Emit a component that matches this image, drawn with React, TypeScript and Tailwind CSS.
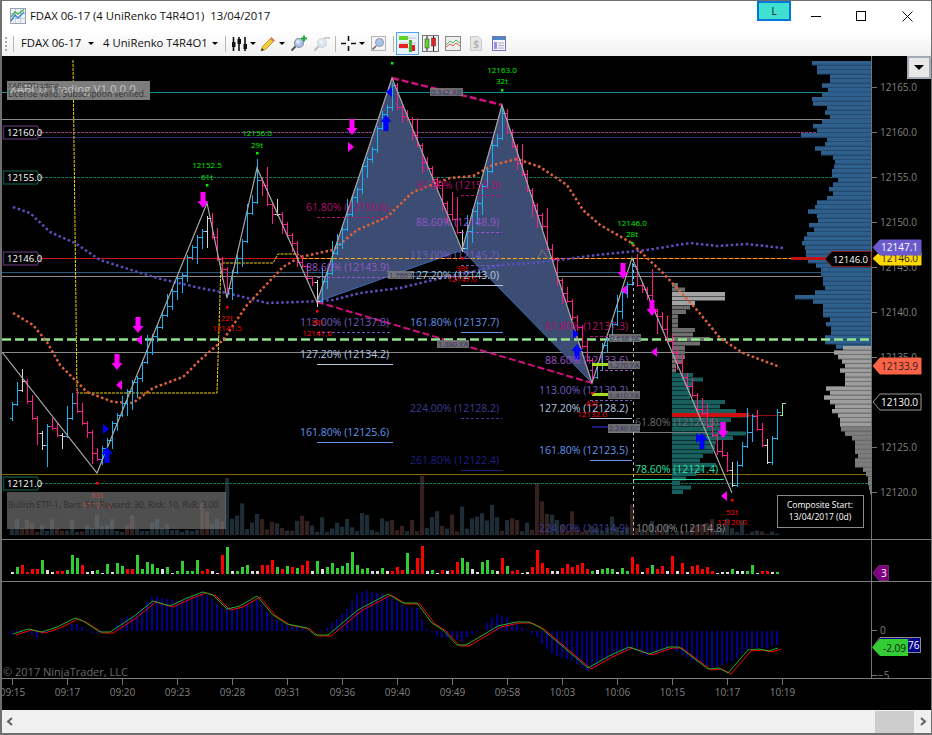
const TIMES = ["09:15", "09:17", "09:20", "09:23", "09:28", "09:31", "09:36", "09:40", "09:49", "09:58", "10:03", "10:06", "10:15", "10:17", "10:19"]
const SCALE = [[12165, 87], [12160, 132], [12155, 177], [12150, 222], [12145, 267], [12140, 312], [12135, 357], [12125, 447], [12120, 492]]

type Pt = [number, number]

const ZIGZAG: Pt[] = [[2, 352], [97, 473], [207, 203], [227, 298], [257, 168], [317, 302], [392, 78], [462, 250], [502, 105], [592, 383], [632, 258], [732, 493]]
const PRICE: Pt[] = [[12, 405], [22, 378], [37, 435], [42, 450], [47, 420], [62, 438], [72, 402], [87, 435], [97, 462], [207, 215], [227, 292], [257, 180], [317, 295], [392, 90], [462, 245], [502, 118], [592, 375], [632, 268], [732, 482], [752, 412], [767, 462], [772, 438], [777, 412]]

const PURPLE_DOTS: Pt[] = [[13, 207], [30, 213], [50, 232], [75, 243], [100, 260], [157, 278], [200, 288], [227, 293], [267, 303], [300, 302], [333, 300], [360, 293], [400, 288], [433, 280], [467, 273], [500, 265], [533, 263], [567, 259], [597, 255], [647, 250], [690, 243], [717, 246], [747, 244], [783, 248]]
const ORANGE_DOTS: Pt[] = [[13, 313], [33, 325], [47, 342], [60, 365], [87, 392], [113, 402], [133, 403], [153, 388], [183, 377], [200, 360], [223, 340], [247, 305], [283, 267], [300, 257], [333, 250], [357, 230], [387, 217], [413, 192], [450, 178], [473, 176], [493, 165], [517, 159], [540, 167], [567, 185], [583, 210], [600, 225], [630, 242], [663, 273], [697, 310], [720, 338], [743, 353], [780, 367]]

const MACD_G: Pt[] = [[13, 634], [28, 629], [42, 632], [57, 627], [75, 618], [83, 621], [100, 632], [110, 632], [133, 617], [153, 601], [170, 606], [187, 598], [203, 592], [213, 595], [227, 609], [240, 606], [257, 596], [273, 615], [287, 624], [307, 628], [315, 635], [328, 635], [358, 610], [373, 602], [388, 594], [403, 603], [417, 603], [432, 623], [443, 630], [457, 645], [466, 645], [483, 635], [498, 626], [516, 622], [529, 622], [541, 628], [588, 668], [609, 656], [629, 647], [649, 654], [669, 647], [679, 647], [708, 669], [719, 668], [728, 673], [748, 650], [759, 649], [769, 651], [778, 648]]
const HIST: Pt[] = [[13, -3], [18, 0], [33, -4], [38, -8], [43, -2], [57, 0], [68, 2], [73, 8], [78, 7], [83, 3], [93, -2], [113, 0], [118, 8], [123, 13], [138, 17], [143, 25], [153, 35], [168, 32], [178, 30], [188, 33], [203, 40], [208, 35], [223, 22], [238, 23], [258, 33], [268, 17], [283, 7], [303, 3], [313, -2], [318, 0], [328, 3], [333, 10], [338, 13], [348, 23], [353, 32], [358, 38], [368, 40], [378, 38], [388, 35], [398, 28], [403, 25], [418, 23], [423, 8], [428, 1], [433, -3], [438, -5], [443, -7], [453, -8], [463, -10], [468, -5], [473, -2], [483, 0], [488, 10], [498, 17], [508, 13], [528, 0], [538, -7], [543, -15], [553, -23], [563, -27], [573, -30], [586, -40], [593, -38], [603, -30], [613, -25], [633, -18], [646, -25], [659, -23], [668, -18], [679, -22], [699, -32], [713, -37], [733, -30], [749, -17], [766, -17], [778, -14]]

const VOL = "w2 g7 r9 r2 r5 r5 g14 w4 w2 r3 r3 g4 g19 g16 r9 w2 w3 g4 w1 g10 w2 g11 g8 r5 r5 g19 g5 g12 g10 g6 w5 g7 w1 g3 g13 g3 g3 g14 r3 r5 w3 w1 r19 g27 w3 g3 g7 g9 w3 w3 r9 r9 r14 g7 r5 g8 r7 g6 r9 r13 w3 g13 w5 g7 g11 g6 g8 g11 g22 g9 g5 g6 w3 w3 g6 w3 r3 r7 r4 g21 r4 r16 r28 w3 g4 w1 r4 w3 r4 r12 g16 g12 w5 w2 g12 g14 g4 w3 r16 g8 r3 r4 w1 w2 r7 r24 r11 r6 w3 w3 r6 r10 r7 r9 r11 r5 g3 w4 g5 g6 g5 w2 g6 g3 r17 r10 w2 r6 g9 r5 r8 w3 r18 w3 r11 w2 r8 r9 r5 r7 r3 w1 w2 w2 g5 w3 w3 g3 g9 w1 r3 r3 w2 g2".split(" ")

const COMPOSITE_BLUE = [59, 54, 54, 41, 41, 49, 43, 49, 59, 58, 44, 46, 41, 49, 58, 54, 70, 44, 46, 56, 50, 38, 36, 37, 39, 39, 33, 38, 42, 38, 44, 54, 56, 63, 54, 53, 62, 57, 64, 67, 69, 66, 65, 65, 63, 55, 50, 50, 48, 48, 46, 56, 76, 58, 48, 48, 48, 41, 45, 40, 40, 46, 46, 35]
const COMPOSITE_GRAY = [28, 37, 33, 29, 26, 31, 26, 26, 26, 45, 41, 47, 41, 36, 39, 33, 31, 31, 30, 26, 19, 16, 16, 16, 13, 16, 16, 8, 5, 3, 3, 2, 1]
const SESSION_GRAY = [6, 13, 53, 53, 23, 18, 14, 6, 6, 6, 23, 21, 38, 28, 13, 13, 13, 11, 4, 4]
const SESSION_TEAL = [21, 31, 21, 18, 18, 18, 53, 48, 64, 76, 59, 54, 54, 74, 61, 44, 43, 41, 31, 28, 44, 31, 24, 14, 8, 19, 11]

const PINK = "#b0106e"
const VIOLET = "#9a55c8"
const INDIGO = "#6f5cc0"
const STEEL = "#b4c6e0"
const CORN = "#6495ed"
const FIBS: { t: string; x: number; y: number; c: string; lx: number; lw: number; dash?: boolean }[] = [
  { t: "61.80% (12150.6)", x: 306, y: 207, c: PINK, lx: 317, lw: 75, dash: true },
  { t: "61.80% (12153.0)", x: 417, y: 185, c: PINK, lx: 461, lw: 41, dash: true },
  { t: "88.60% (12148.9)", x: 416, y: 222, c: VIOLET, lx: 461, lw: 41, dash: true },
  { t: "113.00% (12145.2)", x: 410, y: 255, c: INDIGO, lx: 461, lw: 41, dash: true },
  { t: "88.60% (12143.9)", x: 306, y: 267, c: VIOLET, lx: 317, lw: 75, dash: true },
  { t: "127.20% (12143.0)", x: 410, y: 275, c: STEEL, lx: 461, lw: 42 },
  { t: "113.00% (12137.8)", x: 300, y: 322, c: INDIGO, lx: 317, lw: 75, dash: true },
  { t: "161.80% (12137.7)", x: 410, y: 322, c: CORN, lx: 461, lw: 42 },
  { t: "127.20% (12134.2)", x: 300, y: 354, c: STEEL, lx: 317, lw: 76 },
  { t: "224.00% (12128.2)", x: 410, y: 408, c: "#3c3c94", lx: 461, lw: 41, dash: true },
  { t: "161.80% (12125.6)", x: 300, y: 432, c: CORN, lx: 317, lw: 76 },
  { t: "261.80% (12122.4)", x: 410, y: 460, c: "#1f1f82", lx: 461, lw: 42 },
  { t: "61.80% (12137.3)", x: 545, y: 326, c: PINK, lx: 590, lw: 42, dash: true },
  { t: "88.60% (12133.6)", x: 545, y: 360, c: VIOLET, lx: 590, lw: 42, dash: true },
  { t: "113.00% (12130.2)", x: 539, y: 390, c: INDIGO, lx: 590, lw: 42, dash: true },
  { t: "127.20% (12128.2)", x: 539, y: 408, c: STEEL, lx: 590, lw: 42 },
  { t: "161.80% (12123.5)", x: 539, y: 450, c: CORN, lx: 590, lw: 42 },
  { t: "61.80% (12126.6)", x: 635, y: 422, c: "#6e6e6e", lx: 0, lw: 0 },
  { t: "78.60% (12121.4)", x: 635, y: 469, c: "#2fe0a4", lx: 633, lw: 91 },
  { t: "224.00% (12114.9)", x: 539, y: 528, c: "#3c3c94", lx: 0, lw: 0 },
  { t: "100.00% (12114.8)", x: 636, y: 528, c: "#8a8a8a", lx: 0, lw: 0 },
]

const RATIOS: { t: string; x: number; y: number; w: number }[] = [
  { t: "0.342 AB", x: 430, y: 88, w: 33 },
  { t: "1.786 XA", x: 388, y: 271, w: 24 },
  { t: "1.380 XA", x: 437, y: 340, w: 32 },
  { t: "0.618 BC", x: 609, y: 334, w: 32 },
  { t: "1.270 XA", x: 608, y: 361, w: 32 },
  { t: "1.410 XA", x: 608, y: 391, w: 32 },
  { t: "2.240 BC", x: 608, y: 424, w: 32 },
]

const PIVOTS: { x: number; y: number; c: string; lines: [string, number][] }[] = [
  { x: 207, y: 185, c: "#00f000", lines: [["12152.5", 165], ["61t", 177]] },
  { x: 257, y: 153, c: "#00f000", lines: [["12156.0", 133], ["29t", 145]] },
  { x: 392, y: 63, c: "#00f000", lines: [] },
  { x: 502, y: 90, c: "#00f000", lines: [["12163.0", 70], ["32t", 81]] },
  { x: 632, y: 243, c: "#00f000", lines: [["12146.0", 223], ["28t", 234]] },
  { x: 97, y: 483, c: "#ff0000", lines: [["63t", 495], ["12121.0", 505]] },
  { x: 227, y: 307, c: "#ff0000", lines: [["22t", 318], ["12141.5", 328]] },
  { x: 317, y: 311, c: "#ff0000", lines: [["30t", 322], ["12141.0", 333]] },
  { x: 462, y: 258, c: "#ff0000", lines: [["38t", 268], ["12147.0", 279]] },
  { x: 592, y: 393, c: "#ff0000", lines: [["62t", 403], ["12132.0", 414]] },
  { x: 732, y: 500, c: "#ff0000", lines: [["52t", 512], ["12120.0", 522]] },
]

const DOWN_ARROWS: Pt[] = [[203, 200], [352, 127], [117, 362], [138, 325], [623, 271], [652, 308], [723, 430]]
const UP_ARROWS: Pt[] = [[107, 455], [386, 123], [577, 352], [702, 441]]
const TRIANGLES: { x: number; y: number; c: string; dir: number }[] = [
  { x: 120, y: 385, c: "#ff00ff", dir: -1 },
  { x: 140, y: 340, c: "#ff00ff", dir: -1 },
  { x: 350, y: 147, c: "#ff00ff", dir: 1 },
  { x: 625, y: 290, c: "#ff00ff", dir: -1 },
  { x: 655, y: 352, c: "#ff00ff", dir: -1 },
  { x: 725, y: 496, c: "#ff00ff", dir: -1 },
  { x: 105, y: 429, c: "#0000ff", dir: 1 },
  { x: 390, y: 92, c: "#0000ff", dir: -1 },
  { x: 575, y: 334, c: "#0000ff", dir: 1 },
  { x: 698, y: 438, c: "#0000ff", dir: 1 },
]

const noise = (i: number) => {
  const v = Math.sin(i * 12.9898 + 4.1) * 43758.5453
  return v - Math.floor(v)
}

const interp = (pts: Pt[], x: number) => {
  for (let i = 1; i < pts.length; i++) {
    if (x <= pts[i][0]) {
      const [x0, y0] = pts[i - 1]
      const [x1, y1] = pts[i]
      return y0 + ((x - x0) / (x1 - x0)) * (y1 - y0)
    }
  }
  return pts[pts.length - 1][1]
}

const toPoints = (pts: Pt[]) => pts.map((p) => p.join(",")).join(" ")

const barX = (i: number) => 12 + 5 * i

const trendAt = (x: number) => Math.sign(interp(PRICE, x + 2) - interp(PRICE, x - 2))

const closes = VOL.map((_, i) => interp(PRICE, barX(i)) + (i > 148 ? 0 : (noise(i) - 0.5) * 12))

function Bars() {
  return (
    <g shapeRendering="crispEdges" fill="none">
      {closes.map((c, i) => {
        const o = i === 0 ? c + 14 : closes[i - 1]
        const x = barX(i) + 0.5
        const against = Math.sign(c - o) !== trendAt(barX(i))
        const color = against ? "#d6d6d6" : c < o ? "#1bb0f2" : "#ff1a8c"
        const wick = 3 + noise(i + 70) * noise(i + 110) * 26
        const top = Math.min(o, c) - (noise(i + 150) > 0.5 ? wick : 2)
        const bottom = Math.max(o, c) + (noise(i + 150) > 0.5 ? 2 : wick)
        return (
          <path
            key={i}
            stroke={color}
            d={`M${x} ${Math.round(top)}V${Math.round(bottom)}M${x - 3} ${Math.round(o)}H${x}M${x} ${Math.round(c)}H${x + 3}`}
          />
        )
      })}
      <path stroke="#90ee90" d="M782.5 403V416M780 415H782.5M782.5 403H786" />
    </g>
  )
}

function Flag({ x, y, w, h, fill, stroke, text, color, size = 10 }: { x: number; y: number; w: number; h: number; fill: string; stroke: string; text: string; color: string; size?: number }) {
  return (
    <g>
      <polygon points={`${x},${y + h / 2} ${x + 7},${y} ${x + w},${y} ${x + w},${y + h} ${x + 7},${y + h}`} fill={fill} stroke={stroke} />
      <text x={x + w - 3} y={y + h / 2 + 3.5} fontSize={size} textAnchor="end" fill={color}>
        {text}
      </text>
    </g>
  )
}

function LeftFlag({ y, stroke, text }: { y: number; stroke: string; text: string }) {
  return (
    <g>
      <polygon points={`3.5,${y - 6.5} 37,${y - 6.5} 40.5,${y} 37,${y + 6.5} 3.5,${y + 6.5}`} fill="#000" stroke={stroke} strokeWidth={1.5} />
      <text x={7} y={y + 3.5} fontSize={9.5} fill="#fff">
        {text}
      </text>
    </g>
  )
}

function AxisLine({ y1, y2 }: { y1: number; y2: number }) {
  return <line x1={871.5} x2={871.5} y1={y1} y2={y2} stroke="#747474" />
}

function MainPane() {
  return (
    <div className="relative h-[484px] border-b border-[#7c7c7c]">
      <svg width={929} height={483} viewBox="2 56 929 483" className="block">
        {VOL.map((v, i) => {
          const spikes: Record<number, number> = { 43: 57, 82: 59, 105: 52 }
          const taper = i > 146 ? 0.2 : i > 125 ? 0.6 : 1
          const h = spikes[i] ?? (3 + noise(i + 200) * noise(i + 300) * 32) * taper
          return <rect key={i} x={barX(i) - 2} y={535 - h} width={4.2} height={h} fill={v[0] === "r" ? "#34201f" : "#1e2c35"} />
        })}

        <line x1={2} x2={871} y1={92.5} y2={92.5} stroke="#0f8f8f" />
        <line x1={2} x2={871} y1={119.5} y2={119.5} stroke="#8a8a8a" />
        <line x1={41} x2={871} y1={132.5} y2={132.5} stroke="#8b3f8b" strokeDasharray="3 1" />
        <line x1={2} x2={871} y1={137.5} y2={137.5} stroke="#2b2b70" />
        <line x1={41} x2={871} y1={177.5} y2={177.5} stroke="#17735c" strokeDasharray="3 1" />
        <line x1={41} x2={871} y1={258.5} y2={258.5} stroke="#c81414" />
        <line x1={2} x2={871} y1={272.5} y2={272.5} stroke="#27587c" />
        <line x1={2} x2={871} y1={276.5} y2={276.5} stroke="#8a8a8a" />
        <line x1={2} x2={871} y1={352.5} y2={352.5} stroke="#8a8a8a" />
        <line x1={2} x2={871} y1={474.5} y2={474.5} stroke="#87660f" />
        <line x1={41} x2={871} y1={483.5} y2={483.5} stroke="#17735c" strokeDasharray="3 1" />

        {COMPOSITE_BLUE.map((w, i) => (
          <g key={i}>
            <rect x={871 - w} y={61 + i * 4.5} width={w} height={4.5} fill="#244a6e" />
            <rect x={871 - w} y={61 + i * 4.5} width={w} height={3.5} fill="#2f5f8c" />
          </g>
        ))}
        {COMPOSITE_GRAY.map((w, i) => (
          <g key={i}>
            <rect x={871 - w} y={346 + i * 4.5} width={w} height={4.5} fill="#6e6e6e" />
            <rect x={871 - w} y={346 + i * 4.5} width={w} height={3.5} fill={i < 18 ? "#9e9e9e" : "#7c7c7c"} />
          </g>
        ))}
        {SESSION_GRAY.map((w, i) => (
          <rect key={i} x={672} y={283 + i * 4.5} width={w} height={4} fill={i > 1 && i < 5 ? "#a4a4a4" : "#6f6f6f"} />
        ))}
        {SESSION_TEAL.map((w, i) => (
          <rect key={i} x={672} y={373 + i * 4.5} width={w} height={4} fill="#17605e" />
        ))}
        <rect x={672} y={413} width={77} height={4} fill="#d01010" />
        <line x1={749} x2={780} y1={415.5} y2={415.5} stroke="#8a1010" />
        <rect x={791} y={257} width={34} height={3} fill="#c01414" />
        <line x1={608} x2={707} y1={432.5} y2={432.5} stroke="#7a7a7a" />

        <polygon points="317,302 392,78 462,250" fill="#3c4c72" />
        <polygon points="462,250 502,105 592,383" fill="#3c4c72" />
        <polyline points="538,258 542,250 548,258" fill="none" stroke="#7a7a6a" />
        <line x1={317} y1={302} x2={462} y2={250} stroke="#3d6ab0" />
        <line x1={462} y1={250} x2={592} y2={383} stroke="#3d6ab0" />

        <line x1={392} y1={78} x2={502} y2={105} stroke="#d0107f" strokeWidth={2.5} strokeDasharray="7 3" />
        <line x1={317} y1={302} x2={592} y2={383} stroke="#d0107f" strokeWidth={2} strokeDasharray="7 3" />

        <polyline points="73,60 76,310 77,393 217,393 221,263 273,263 278,254 298,254 303,258" fill="none" stroke="#f2d200" strokeDasharray="3 1" />
        <line x1={303} x2={791} y1={258.5} y2={258.5} stroke="#ffb000" strokeDasharray="4 2" />
        <line x1={2} x2={871} y1={339.5} y2={339.5} stroke="#93e48f" strokeWidth={2.5} strokeDasharray="9 4" />
        <line x1={633.5} x2={633.5} y1={258} y2={535} stroke="#bbb" strokeDasharray="3 3" />

        <polyline points={toPoints(PURPLE_DOTS)} fill="none" stroke="#5b50bd" strokeWidth={2.5} strokeDasharray="2.5 2.5" />
        <polyline points={toPoints(ORANGE_DOTS)} fill="none" stroke="#e0603a" strokeWidth={2.5} strokeDasharray="2.5 2.5" />

        <Bars />
        <polyline points={toPoints(ZIGZAG)} fill="none" stroke="#a8a8a8" strokeWidth={1.2} />

        {DOWN_ARROWS.map(([x, y], i) => (
          <path key={i} d={`M${x - 2.5} ${y - 8}h5v9h3l-5.5 7l-5.5-7h3z`} fill="#ff00ff" />
        ))}
        {UP_ARROWS.map(([x, y], i) => (
          <path key={i} d={`M${x - 2.5} ${y + 8}h5v-9h3l-5.5-7l-5.5 7h3z`} fill="#0000ff" />
        ))}
        {TRIANGLES.map((t, i) => (
          <path key={i} d={`M${t.x + 4 * t.dir} ${t.y}L${t.x - 2 * t.dir} ${t.y - 5}V${t.y + 5}z`} fill={t.c} />
        ))}

        {FIBS.map((f) => (
          <g key={f.t + f.x}>
            <text x={f.x} y={f.y + 4} fontSize={10.5} fill={f.c}>
              {f.t}
            </text>
            {f.lw > 0 && <line x1={f.lx} x2={f.lx + f.lw} y1={f.y + 10.5} y2={f.y + 10.5} stroke={f.c} strokeDasharray={f.dash ? "3 2" : undefined} />}
          </g>
        ))}

        <rect x={592} y={363} width={16} height={3} fill="#a4e020" />
        <rect x={592} y={393} width={16} height={3} fill="#a4e020" />
        <rect x={592} y={426} width={16} height={2} fill="#1a1a80" />
        {RATIOS.map((r) => (
          <g key={r.t}>
            <rect x={r.x} y={r.y} width={r.w} height={8} fill="#7e7e7e" opacity={0.85} />
            <text x={r.x + 1} y={r.y + 7} fontSize={7.5} fill="#35356e">
              {r.t}
            </text>
          </g>
        ))}

        {PIVOTS.map((p) => (
          <g key={p.x} fill={p.c} textAnchor="middle" fontSize={8}>
            <rect x={p.x - 1} y={p.y - 1} width={2.5} height={2.5} />
            {p.lines.map(([t, y]) => (
              <text key={t} x={p.x} y={y + 3}>
                {t}
              </text>
            ))}
          </g>
        ))}

        <LeftFlag y={132.5} stroke="#4c2a5c" text="12160.0" />
        <LeftFlag y={177.5} stroke="#0c4a3c" text="12155.0" />
        <LeftFlag y={258.5} stroke="#4c2a5c" text="12146.0" />
        <LeftFlag y={483.5} stroke="#0c4a3c" text="12121.0" />

        <rect x={7} y={81} width={143} height={19} fill="#7d7d7d" />
        <text x={10} y={93} fontSize={11.5} fill="#c4c4c4">
          XABCD Trading V1.0.0.0
        </text>
        <text x={8} y={88} fontSize={7.5} fill="#333">
          XABCDTrading
        </text>
        <text x={8} y={97} fontSize={8.5} fill="#333">
          License valid. Subscription verified.
        </text>

        <rect x={7} y={492} width={219} height={37} fill="#808080" opacity={0.62} />
        <text x={8} y={508} fontSize={8.5} fill="#2e2e2e">
          Bullish ETP-1, Bars: 56, Reward: 30, Risk: 10, RvR: 3.00
        </text>

        <AxisLine y1={56} y2={539} />
        {SCALE.map(([p, y]) => (
          <g key={p}>
            <line x1={872} x2={877} y1={y + 0.5} y2={y + 0.5} stroke="#747474" />
            <text x={880} y={y + 4} fontSize={10} fill="#808080">
              {p}.0
            </text>
          </g>
        ))}

        <Flag x={873} y={252} w={48} h={13} fill="#ffd700" stroke="#ffd700" text="12146.0" color="#222" />
        <Flag x={873} y={240} w={48} h={15} fill="#6a5acd" stroke="#6a5acd" text="12147.1" color="#fff" />
        <Flag x={825} y={251.5} w={46} h={15} fill="#000" stroke="#8a1414" text="12146.0" color="#fff" size={9.5} />
        <Flag x={873} y={358} w={48} h={16} fill="#ff6347" stroke="#ff6347" text="12133.9" color="#222" />
        <Flag x={873} y={394} w={48} h={16} fill="#000" stroke="#9a9a9a" text="12130.0" color="#fff" />

        <rect x={777.5} y={495.5} width={86} height={32} fill="#000" stroke="#8a8a8a" />
        <text x={820} y={508} fontSize={8.5} fill="#fff" textAnchor="middle">
          Composite Start:
        </text>
        <text x={820} y={520} fontSize={8.5} fill="#fff" textAnchor="middle">
          13/04/2017 (0d)
        </text>
      </svg>
      <button className="absolute right-0 top-0 flex h-[23px] w-[24px] items-center justify-center border-2 border-[#a4abb2] bg-[#e8e8e8]">
        <span className="h-0 w-0 border-x-[5px] border-t-[5px] border-x-transparent border-t-black" />
      </button>
    </div>
  )
}

function VolumePane() {
  return (
    <div className="h-[42px] border-b border-[#7c7c7c]">
      <svg width={929} height={41} viewBox="2 540 929 41" className="block">
        {VOL.map((v, i) => {
          const h = Number(v.slice(1))
          const fill = v[0] === "g" ? "#32cd32" : v[0] === "r" ? "#ff0000" : "#dcdcdc"
          return <rect key={i} x={barX(i) - 1} y={574 - h} width={3} height={h} fill={fill} shapeRendering="crispEdges" />
        })}
        <AxisLine y1={540} y2={581} />
        <polygon points="873,573 879,565.5 888.5,565.5 888.5,580.5 879,580.5" fill="#800080" stroke="#a050a0" strokeWidth={0.5} />
        <text x={881} y={577} fontSize={10} fill="#fff">
          3
        </text>
      </svg>
    </div>
  )
}

function MacdPane() {
  return (
    <div className="relative z-10 h-[97px] border-b border-[#7c7c7c]">
      <svg width={929} height={96} viewBox="2 582 929 96" className="block overflow-visible">
        {VOL.map((_, i) => {
          const v = interp(HIST, barX(i))
          return <rect key={i} x={barX(i) - 1} y={v > 0 ? 631 - v : 631} width={2} height={Math.abs(v)} fill="#00008f" shapeRendering="crispEdges" />
        })}
        <polyline points={toPoints(MACD_G.map(([x, y]) => [x + 3, y + 1]))} fill="none" stroke="#ff0000" />
        <polyline points={toPoints(MACD_G)} fill="none" stroke="#22b022" />
        <text x={3} y={676} fontSize={11} fill="#6a6a6a">
          © 2017 NinjaTrader, LLC
        </text>
        <AxisLine y1={582} y2={678} />
        <line x1={872} x2={877} y1={630.5} y2={630.5} stroke="#747474" />
        <line x1={872} x2={877} y1={675.5} y2={675.5} stroke="#747474" />
        <text x={880} y={634} fontSize={10} fill="#808080">
          0
        </text>
        <text x={878} y={679} fontSize={10} fill="#808080">
          −5
        </text>
        <polygon points="873,647 880,637.5 920.5,637.5 920.5,652.5 880,652.5" fill="#00008b" stroke="#8a8a8a" />
        <text x={908} y={649} fontSize={10} fill="#fff">
          76
        </text>
        <polygon points="872,647.5 880,639 908,639 908,656 880,656" fill="#32cd32" />
        <text x={883} y={651.5} fontSize={10} fill="#111">
          -2.09
        </text>
      </svg>
    </div>
  )
}

function TimePane() {
  return (
    <div className="h-[31px]">
      <svg width={929} height={31} viewBox="2 679 929 31" className="block">
        {TIMES.map((t, i) => {
          const x = 12.5 + 55 * i
          return (
            <g key={t}>
              <line x1={x} x2={x} y1={679} y2={685} stroke="#747474" />
              <text x={x} y={696} fontSize={10} fill="#808080" textAnchor="middle">
                {t}
              </text>
            </g>
          )
        })}
      </svg>
    </div>
  )
}

function Caret({ className }: { className: string }) {
  return <span className={`h-0 w-0 border-x-[3px] border-t-[3px] border-x-transparent border-t-black ${className}`} />
}

function ChartIcon() {
  return (
    <svg width={16} height={16} viewBox="0 0 16 16">
      <rect x={0.5} y={0.5} width={15} height={15} fill="#eef0f6" stroke="#9aa2b6" />
      <path d="M1 5.5H15M1 10.5H15M5.5 1V15M10.5 1V15" stroke="#c6ccdc" />
      <path d="M1 13L5 7L8 10L14 4" fill="none" stroke="#3b7fd6" strokeWidth={1.4} />
      <path d="M1 9L5 4L8 6L14 1.5" fill="none" stroke="#3cb54a" strokeWidth={1.4} />
    </svg>
  )
}

function BarsIcon() {
  return (
    <svg width={17} height={16} viewBox="0 0 17 16">
      <path d="M2.5 1V15M8 1V15M14 1V15" stroke="#111" strokeWidth={1.6} />
      <rect x={1} y={6} width={3.5} height={5} fill="#111" />
      <rect x={6.5} y={3} width={3.5} height={5} fill="#111" />
      <rect x={12.5} y={8} width={3.5} height={5} fill="#111" />
    </svg>
  )
}

function PencilIcon() {
  return (
    <svg width={16} height={16} viewBox="0 0 16 16">
      <path d="M1 15L2.5 10.5L11.5 1.5L14.5 4.5L5.5 13.5z" fill="#f2cf3a" stroke="#a88818" strokeWidth={0.8} />
      <path d="M11.5 1.5L14.5 4.5L13 6L10 3z" fill="#e8746a" />
      <path d="M1 15L2 12L4 14z" fill="#333" />
    </svg>
  )
}

function LensIcon({ faded, mark }: { faded?: boolean; mark?: "plus" | "minus" }) {
  return (
    <svg width={17} height={17} viewBox="0 0 17 17" className={faded ? "opacity-35" : ""}>
      <path d="M1.5 15.5L6 11" stroke="#555" strokeWidth={2} />
      <circle cx={9} cy={8} r={4.5} fill="#a8c4ea" stroke="#8c94a0" strokeWidth={1.2} />
      <circle cx={8} cy={7} r={2} fill="#dde8f8" />
      {mark === "plus" && <path d="M14 0.5V6.5M11 3.5H17" stroke="#22a83a" strokeWidth={2} />}
      {mark === "minus" && <path d="M11 3H17" stroke="#777" strokeWidth={2} />}
    </svg>
  )
}

function CrosshairIcon() {
  return (
    <svg width={15} height={15} viewBox="0 0 15 15">
      <path d="M0 7.5H5M10 7.5H15M7.5 0V5M7.5 10V15" stroke="#111" strokeWidth={1.6} />
    </svg>
  )
}

function BoxLensIcon() {
  return (
    <svg width={15} height={15} viewBox="0 0 15 15">
      <rect x={0.5} y={0.5} width={14} height={14} fill="#f4f4f4" stroke="#b4b4b4" />
      <path d="M1.5 13.5L5 10" stroke="#666" strokeWidth={1.6} />
      <circle cx={8.5} cy={6.5} r={4} fill="#a8c4ea" stroke="#8c94a0" />
    </svg>
  )
}

function IndicatorIcon() {
  return (
    <svg width={17} height={17} viewBox="0 0 17 17">
      <path d="M1 3H17M1 8H17M1 13H17" stroke="#c4c4c4" />
      <rect x={0} y={1} width={9} height={4} fill="#5fd32a" />
      <rect x={0} y={9} width={9} height={4} fill="#e82222" />
      <rect x={10} y={5} width={3} height={12} fill="#43b02a" />
      <rect x={13} y={10} width={3} height={6} fill="#d82020" />
    </svg>
  )
}

function CandlesIcon() {
  return (
    <svg width={17} height={17} viewBox="0 0 17 17">
      <rect x={0.5} y={0.5} width={16} height={16} fill="#f0f0f0" stroke="#777" />
      <path d="M5 1V16M11.5 1V16" stroke="#222" />
      <rect x={3} y={4} width={4} height={9} fill="#5fd32a" stroke="#333" strokeWidth={0.5} />
      <rect x={9.5} y={3} width={4} height={8} fill="#e82222" stroke="#333" strokeWidth={0.5} />
    </svg>
  )
}

function LinesIcon() {
  return (
    <svg width={16} height={15} viewBox="0 0 16 15">
      <rect x={0.5} y={0.5} width={15} height={14} fill="#eeeeee" stroke="#8a8a8a" />
      <path d="M1 9L5 5L8 7L11 4L15 7" fill="none" stroke="#4cb85a" />
      <path d="M1 11L5 8L8 10L11 7L15 10" fill="none" stroke="#dd5a5a" />
    </svg>
  )
}

function DollarIcon() {
  return (
    <svg width={12} height={15} viewBox="0 0 12 15">
      <path d="M0.5 0.5H8L11.5 4V14.5H0.5z" fill="#e6e6e6" stroke="#c8c8c8" />
      <text x={6} y={12} fontSize={10} fontWeight={700} textAnchor="middle" fill="#b4b4b4">
        $
      </text>
    </svg>
  )
}

function PropertiesIcon() {
  return (
    <svg width={14} height={15} viewBox="0 0 14 15">
      <rect x={0.5} y={0.5} width={13} height={14} fill="#f4f4fa" stroke="#7a6fb8" />
      <rect x={1} y={1} width={12} height={3} fill="#4a8ac0" />
      <rect x={2} y={6} width={3} height={7} fill="#9a8fe0" />
      <path d="M6 7H12M6 9.5H12M6 12H12" stroke="#a8a8c8" />
    </svg>
  )
}

export default function App() {
  return (
    <div className="flex h-[735px] w-[932px] flex-col overflow-hidden border-t border-b-2 border-l-2 border-r border-[#6f6f6f] bg-black font-['Open_Sans',sans-serif]">
      {/* title bar */}
      <div className="flex h-[30px] items-center bg-white text-[11.3px] text-[#111]">
        <div className="ml-[8px] mr-[4px]">
          <ChartIcon />
        </div>
        <span className="whitespace-pre">FDAX 06-17 (4 UniRenko T4R4O1)  13/04/2017</span>
        <div className="ml-auto mb-[10px] flex h-[20px] w-[34px] items-center justify-center border-2 border-[#0078d7] bg-[#40e0d0] text-[10px]">L</div>
        <div className="ml-[20px] h-px w-[10px] bg-black" />
        <div className="ml-[35px] h-[10px] w-[10px] border border-black" />
        <svg width={11} height={11} viewBox="0 0 11 11" className="ml-[36px] mr-[18px]">
          <path d="M0.5 0.5L10.5 10.5M10.5 0.5L0.5 10.5" stroke="#111" />
        </svg>
      </div>

      {/* toolbar */}
      <div className="flex h-[25px] items-center bg-gradient-to-b from-white to-[#f0f0f0] text-[11.3px] text-[#111]">
        <span className="ml-[3px] h-[14px] w-[2px] border-l-2 border-dotted border-[#a8a8a8]" />
        <span className="ml-[6px] h-[16px] w-px bg-[#b8b8b8]" />
        <span className="ml-[7px] w-[62px] whitespace-nowrap">FDAX 06-17</span>
        <Caret className="ml-[5px]" />
        <span className="ml-[9px] w-[103px] whitespace-nowrap">4 UniRenko T4R4O1</span>
        <Caret className="ml-[6px]" />
        <span className="ml-[7px] h-[16px] w-px bg-[#b8b8b8]" />
        <span className="ml-[5px]"><BarsIcon /></span>
        <Caret className="ml-[2px]" />
        <span className="ml-[4px]"><PencilIcon /></span>
        <Caret className="ml-[3px]" />
        <span className="ml-[5px]"><LensIcon mark="plus" /></span>
        <span className="ml-[6px]"><LensIcon faded mark="minus" /></span>
        <span className="ml-[5px] h-[16px] w-px bg-[#b8b8b8]" />
        <span className="ml-[5px]"><CrosshairIcon /></span>
        <Caret className="ml-[3px]" />
        <span className="ml-[6px]"><BoxLensIcon /></span>
        <span className="ml-[7px] h-[16px] w-px bg-[#b8b8b8]" />
        <span className="ml-[2px] flex h-[23px] w-[23px] items-center justify-center border border-[#4ea6ee] bg-[#e8f3fc]">
          <IndicatorIcon />
        </span>
        <span className="ml-[3px]"><CandlesIcon /></span>
        <span className="ml-[6px]"><LinesIcon /></span>
        <span className="ml-[9px]"><DollarIcon /></span>
        <span className="ml-[10px]"><PropertiesIcon /></span>
      </div>

      <MainPane />
      <VolumePane />
      <MacdPane />
      <TimePane />

      {/* scrollbar */}
      <div className="flex h-[23px] items-center bg-[#f0f0f0] text-[#606060]">
        <svg width={8} height={9} viewBox="0 0 8 9" className="ml-[4px]">
          <path d="M6 1L2 4.5L6 8" fill="none" stroke="#606060" strokeWidth={2} />
        </svg>
        <div className="ml-auto h-[22px] w-[39px] bg-[#cdcdcd]" />
        <svg width={8} height={9} viewBox="0 0 8 9" className="ml-[5px] mr-[4px]">
          <path d="M2 1L6 4.5L2 8" fill="none" stroke="#606060" strokeWidth={2} />
        </svg>
      </div>
    </div>
  )
}
